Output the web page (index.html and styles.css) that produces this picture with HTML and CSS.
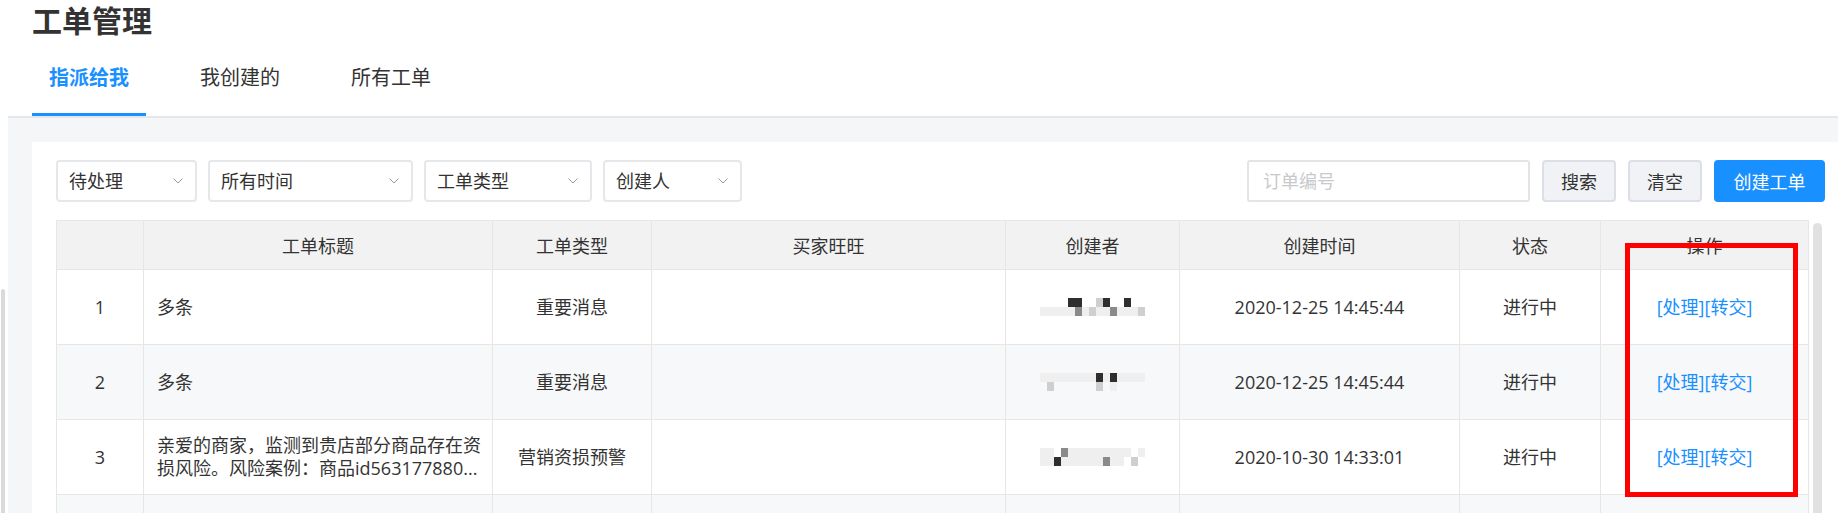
FILE: index.html
```html
<!DOCTYPE html>
<html lang="zh-CN">
<head>
<meta charset="utf-8">
<title>工单管理</title>
<link rel="stylesheet" href="styles.css">
</head>
<body>
<div class="page">
  <aside class="rail"><div class="rail-bar"></div></aside>
  <main class="main">
    <header class="head">
      <h1 class="title">工单管理</h1>
      <nav class="tabs">
        <a class="tab active">指派给我</a>
        <a class="tab">我创建的</a>
        <a class="tab">所有工单</a>
      </nav>
    </header>
    <section class="content">
      <div class="card">
        <div class="filters">
          <div class="selects">
            <div class="select sel-status"><span>待处理</span><svg class="chev" width="10" height="6" viewBox="0 0 10 6"><path d="M0.5 0.5 L5 5 L9.5 0.5" /></svg></div>
            <div class="select sel-time"><span>所有时间</span><svg class="chev" width="10" height="6" viewBox="0 0 10 6"><path d="M0.5 0.5 L5 5 L9.5 0.5" /></svg></div>
            <div class="select sel-type"><span>工单类型</span><svg class="chev" width="10" height="6" viewBox="0 0 10 6"><path d="M0.5 0.5 L5 5 L9.5 0.5" /></svg></div>
            <div class="select sel-creator"><span>创建人</span><svg class="chev" width="10" height="6" viewBox="0 0 10 6"><path d="M0.5 0.5 L5 5 L9.5 0.5" /></svg></div>
          </div>
          <div class="actions">
            <input class="search-input" type="text" placeholder="订单编号">
            <button class="btn">搜索</button>
            <button class="btn">清空</button>
            <button class="btn btn-primary">创建工单</button>
          </div>
        </div>
        <div class="table-wrap">
          <div class="table">
            <div class="tr thead">
              <div class="th"></div>
              <div class="th">工单标题</div>
              <div class="th">工单类型</div>
              <div class="th">买家旺旺</div>
              <div class="th">创建者</div>
              <div class="th">创建时间</div>
              <div class="th">状态</div>
              <div class="th">操作</div>
            </div>
            <div class="tr">
              <div class="td">1</div>
              <div class="td td-title">多条</div>
              <div class="td">重要消息</div>
              <div class="td"></div>
              <div class="td"><span class="mosaic">
                <i></i><i></i><i></i><i></i><i class="d"></i><i class="d"></i><i></i><i></i><i class="b"></i><i class="d"></i><i></i><i></i><i class="d"></i><i></i><i></i>
                <i class="a"></i><i class="a"></i><i class="a"></i><i class="a"></i><i class="a"></i><i class="c"></i><i class="a"></i><i class="b"></i><i class="a"></i><i class="a"></i><i class="c"></i><i class="a"></i><i class="a"></i><i class="a"></i><i class="b"></i>
              </span></div>
              <div class="td">2020-12-25 14:45:44</div>
              <div class="td">进行中</div>
              <div class="td"><span class="ops">[处理][转交]</span></div>
            </div>
            <div class="tr striped">
              <div class="td">2</div>
              <div class="td td-title">多条</div>
              <div class="td">重要消息</div>
              <div class="td"></div>
              <div class="td"><span class="mosaic">
                <i class="a"></i><i class="a"></i><i class="a"></i><i class="a"></i><i class="a"></i><i class="a"></i><i class="a"></i><i class="a"></i><i class="d"></i><i class="a"></i><i class="d"></i><i class="a"></i><i class="a"></i><i class="a"></i><i class="a"></i>
                <i></i><i class="b"></i><i></i><i></i><i></i><i></i><i></i><i></i><i class="b"></i><i></i><i class="a"></i><i></i><i></i><i></i><i></i>
              </span></div>
              <div class="td">2020-12-25 14:45:44</div>
              <div class="td">进行中</div>
              <div class="td"><span class="ops">[处理][转交]</span></div>
            </div>
            <div class="tr">
              <div class="td">3</div>
              <div class="td td-title" title="亲爱的商家，监测到贵店部分商品存在资损风险。风险案例：商品id563177880...">亲爱的商家，监测到贵店部分商品存在资损风险。风险案例：商品id563177880...</div>
              <div class="td">营销资损预警</div>
              <div class="td"></div>
              <div class="td"><span class="mosaic">
                <i class="a"></i><i class="a"></i><i></i><i class="c"></i><i class="a"></i><i class="a"></i><i class="a"></i><i class="a"></i><i class="a"></i><i class="a"></i><i class="a"></i><i class="a"></i><i class="a"></i><i></i><i class="a"></i>
                <i class="a"></i><i class="a"></i><i class="d"></i><i class="a"></i><i class="a"></i><i class="a"></i><i class="a"></i><i class="a"></i><i class="a"></i><i class="c"></i><i class="a"></i><i class="a"></i><i></i><i class="b"></i><i></i>
              </span></div>
              <div class="td">2020-10-30 14:33:01</div>
              <div class="td">进行中</div>
              <div class="td"><span class="ops">[处理][转交]</span></div>
            </div>
            <div class="tr striped">
              <div class="td"></div>
              <div class="td td-title"></div>
              <div class="td"></div>
              <div class="td"></div>
              <div class="td"></div>
              <div class="td"></div>
              <div class="td"></div>
              <div class="td"></div>
            </div>
          </div>
          <div class="scrollbar"></div>
          <div class="highlight"></div>
        </div>
      </div>
    </section>
  </main>
</div>
</body>
</html>
```

FILE: styles.css
```css
html, body {
  margin: 0;
  padding: 0;
  background: #ffffff;
  overflow: hidden;
}

body {
  font-family: "Open Sans", "Noto Sans CJK SC", sans-serif;
  color: #333333;
}

.page {
  display: flex;
  width: 1838px;
  height: 513px;
  overflow: hidden;
}

.rail {
  flex: none;
  width: 8px;
  padding-top: 289px;
  box-sizing: border-box;
}

.rail-bar {
  width: 4px;
  height: 260px;
  margin-left: 1px;
  background: #dadada;
  border-radius: 2px 2px 0 0;
}

.main {
  flex: none;
  width: 1865px;
  display: flex;
  flex-direction: column;
}

.head {
  padding-left: 24px;
  background: #ffffff;
}

.title {
  margin: 0;
  font-family: "Noto Sans CJK SC", sans-serif;
  font-size: 30px;
  line-height: 38px;
  font-weight: 700;
  color: #333333;
  height: 38px;
}

.tabs {
  display: flex;
  gap: 37px;
  margin-left: -24px;
  padding-left: 24px;
  border-bottom: 2px solid #e4e7ed;
}

.tab {
  padding: 25px 17px 22px;
  font-family: "Noto Sans CJK SC", sans-serif;
  font-size: 20px;
  line-height: 28px;
  color: #333333;
  border-bottom: 3px solid transparent;
  cursor: pointer;
}

.tab.active {
  color: #1890ff;
  font-weight: 700;
  border-bottom-color: #1890ff;
}

.content {
  flex: 1;
  background: #f5f6f8;
  padding: 24px 24px 0;
}

.card {
  background: #ffffff;
  padding: 18px 24px 0;
  height: 100%;
  box-sizing: border-box;
}

.filters {
  display: flex;
  justify-content: space-between;
  height: 42px;
}

.selects {
  display: flex;
  gap: 11px;
}

.select {
  display: flex;
  align-items: center;
  justify-content: space-between;
  box-sizing: border-box;
  height: 42px;
  padding: 0 12px 0 11px;
  border: 2px solid #e5e7eb;
  border-radius: 4px;
  font-size: 18px;
  line-height: 24px;
  color: #333333;
  background: #ffffff;
}

.sel-status { width: 141px; }
.sel-time { width: 205px; }
.sel-type { width: 168px; }
.sel-creator { width: 139px; }

.chev path {
  fill: none;
  stroke: #9a9a9a;
  stroke-width: 1;
}

.actions {
  display: flex;
  gap: 12px;
}

.search-input {
  box-sizing: border-box;
  width: 283px;
  height: 42px;
  margin: 0;
  padding: 0 14px;
  border: 2px solid #e2e4e8;
  border-radius: 3px;
  font-family: "Open Sans", "Noto Sans CJK SC", sans-serif;
  font-size: 18px;
  color: #333333;
  outline: none;
}

.search-input::placeholder {
  color: #c8c9cc;
}

.btn {
  box-sizing: border-box;
  height: 42px;
  margin: 0;
  padding: 0 17px;
  border: 2px solid #dcdfe6;
  border-radius: 4px;
  background: #f0f2f5;
  font-family: "Noto Sans CJK SC", sans-serif;
  font-size: 18px;
  line-height: 24px;
  color: #333333;
  cursor: pointer;
}

.btn-primary {
  padding: 0 17.5px;
  border-color: #1890ff;
  background: #1890ff;
  color: #ffffff;
}

.table-wrap {
  position: relative;
  display: flex;
  gap: 4px;
  margin-top: 18px;
}

.table {
  flex: none;
  width: 1753px;
  border-top: 1px solid #e6e6e6;
  border-left: 1px solid #e6e6e6;
  box-sizing: border-box;
  font-size: 18px;
}

.tr {
  display: grid;
  grid-template-columns: 87px 349px 159px 354px 174px 280px 141px 208px;
  background: #ffffff;
}

.tr.striped {
  background: #f7f8fa;
}

.tr.thead {
  background: #f2f2f2;
}

.th,
.td {
  display: flex;
  align-items: center;
  justify-content: center;
  box-sizing: border-box;
  border-right: 1px solid #e6e6e6;
  border-bottom: 1px solid #e6e6e6;
  text-align: center;
  color: #333333;
}

.th {
  height: 49px;
  font-family: "Noto Sans CJK SC", sans-serif;
  font-weight: 400;
  line-height: 24px;
}

.td {
  height: 75px;
  line-height: 23px;
}

.td-title {
  justify-content: flex-start;
  text-align: left;
  padding: 0 10px 0 13px;
}

.ops {
  color: #1890ff;
  cursor: pointer;
}

.mosaic {
  display: flex;
  flex-wrap: wrap;
  width: 105px;
  height: 18px;
}

.mosaic i {
  display: block;
  width: 7px;
  height: 9px;
}

.mosaic i.a { background: #efefef; }
.mosaic i.b { background: #cfcfcf; }
.mosaic i.c { background: #8a8a8a; }
.mosaic i.d { background: #2e2e2e; }

.scrollbar {
  flex: none;
  width: 9px;
  margin-top: 3px;
  background: #e1e1e1;
  border-radius: 5px 5px 0 0;
}

.highlight {
  position: absolute;
  left: 1569px;
  top: 23px;
  width: 173px;
  height: 254px;
  box-sizing: border-box;
  border: 5px solid #ff0000;
  pointer-events: none;
}
```
